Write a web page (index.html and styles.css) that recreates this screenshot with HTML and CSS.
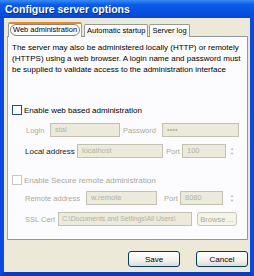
FILE: index.html
```html
<!DOCTYPE html>
<html lang="en">
<head>
    <meta charset="UTF-8">
    <title>Configure server options</title>
    <link rel="stylesheet" href="styles.css">
</head>
<body>
    <div class="window">
        <div class="titlebar">Configure server options</div>

        <div class="client">
            <div class="tabs">
                <div class="tab active"><span class="focus">Web administration</span></div>
                <div class="tab">Automatic startup</div>
                <div class="tab">Server log</div>
            </div>

            <div class="panel">
                <p class="intro">
                    The server may also be administered locally (HTTP) or remotely
                    (HTTPS) using a web browser. A login name and password must be
                    supplied to validate access to the administration interface
                </p>

                <label class="check check-web">
                    <span class="box"></span>Enable web based administration
                </label>

                <div class="row row-login">
                    <span class="lbl w-login">Login</span>
                    <span class="field w-70">stal</span>
                    <span class="lbl w-pass">Password</span>
                    <span class="field w-77">&bull;&bull;&bull;&bull;</span>
                </div>

                <div class="row row-local">
                    <span class="lbl lbl-dark w-local">Local address</span>
                    <span class="field w-86">localhost</span>
                    <span class="lbl w-port1">Port</span>
                    <span class="field w-44">100</span>
                    <span class="spin"><i>&#9650;</i><i>&#9660;</i></span>
                </div>

                <label class="check check-secure disabled">
                    <span class="box"></span>Enable Secure remote administration
                </label>

                <div class="row row-remote">
                    <span class="lbl w-remote">Remote address</span>
                    <span class="field w-71">w.remote</span>
                    <span class="lbl w-port2">Port</span>
                    <span class="field w-43">8080</span>
                    <span class="spin spin-far"><i>&#9650;</i><i>&#9660;</i></span>
                </div>

                <div class="row row-ssl">
                    <span class="lbl w-ssl">SSL Cert</span>
                    <span class="field field-path w-134">C:\Documents and Settings\All Users\</span>
                    <span class="btn btn-browse">Browse ...</span>
                </div>
            </div>

            <div class="actions">
                <span class="btn btn-main">Save</span>
                <span class="btn btn-main">Cancel</span>
            </div>
        </div>
    </div>
</body>
</html>
```

FILE: styles.css
```css
* {
    margin: 0;
    padding: 0;
    box-sizing: border-box;
}

body {
    width: 254px;
    height: 276px;
    overflow: hidden;
    font-family: 'Liberation Sans', Arial, sans-serif;
    font-size: 8px;
    color: #000;
    background: #0a3fc8;
}

.window {
    height: 276px;
    background: #ece9d8;
    border-left: 4px solid #0b4ae0;
    border-right: 4px solid #0b4ae0;
    border-bottom: 4px solid #0a3cc0;
    display: flex;
    flex-direction: column;
}

.titlebar {
    height: 18px;
    margin: 0 -4px;
    padding: 3px 0 0 5px;
    background: linear-gradient(180deg, #3a8cf7 0%, #0a5de8 25%, #0650e0 70%, #0a46d0 100%);
    color: #fff;
    font-weight: bold;
    font-size: 10.5px;
    text-shadow: 1px 1px 0 #0a2a8c;
}

.client {
    flex: 1;
    padding: 4px 2px 0 3px;
    display: flex;
    flex-direction: column;
}

/* tabs */
.tabs {
    display: flex;
    align-items: flex-end;
    height: 15px;
    padding-left: 1px;
    position: relative;
    z-index: 1;
}

.tab {
    height: 13px;
    line-height: 12px;
    padding: 0 2px;
    margin-right: 1px;
    background: linear-gradient(180deg, #fff 0%, #f4f3ee 100%);
    border: 1px solid #919b9c;
    border-bottom: none;
    border-radius: 2px 2px 0 0;
    font-size: 7.5px;
    white-space: nowrap;
}

.tab.active {
    height: 15px;
    background: #fcfcfe;
    border-top: 2px solid #e68b2c;
    padding: 0 1px;
    margin-right: 2px;
}

.tab .focus {
    display: inline-block;
    line-height: 10px;
    padding: 0 2px;
    border: 1px solid #9a7e66;
    border-radius: 7px;
}

.panel {
    height: 204px;
    margin-top: -1px;
    background: #fcfcfe;
    border: 1px solid #919b9c;
    border-left-color: #a0a8a8;
}

.intro {
    padding: 5px 5px 0 4px;
    line-height: 11px;
    font-size: 8px;
}

/* check boxes */
.check {
    display: flex;
    align-items: center;
    margin-left: 4px;
    font-size: 8px;
    white-space: nowrap;
}

.check .box {
    width: 10px;
    height: 10px;
    border: 1px solid #1c5180;
    background: #fff;
    margin-right: 2px;
}

.check-web {
    margin-top: 30px;
}

.check-secure {
    margin-top: 17px;
}

.disabled {
    color: #aca899;
}

.disabled .box {
    border-color: #cac8bb;
}

/* rows */
.row {
    display: flex;
    align-items: center;
    padding-left: 17px;
    height: 14px;
    color: #aca899;
    font-size: 7.5px;
    white-space: nowrap;
}

.row-login { margin-top: 8px; }
.row-local { margin-top: 7px; }
.row-remote { margin-top: 6px; }
.row-ssl { margin-top: 7px; }

.lbl {
    flex-shrink: 0;
}

.lbl-dark {
    color: #1a1a1a;
    font-size: 8px;
}

.field {
    flex-shrink: 0;
    height: 14px;
    line-height: 12px;
    padding-left: 4px;
    background: #ebeadb;
    border: 1px solid #c3c1b2;
    color: #b5b3a4;
    overflow: hidden;
}

.field-path {
    padding-left: 3px;
    font-size: 7px;
    letter-spacing: -0.1px;
}

.spin {
    display: flex;
    flex-direction: column;
    margin-left: 4px;
    font-size: 4px;
    line-height: 5px;
    color: #b9b7aa;
}

.spin-far { margin-left: 7px; }
.spin i { font-style: normal; }

.w-login { width: 25px; padding-left: 1px; }
.w-pass { width: 42px; padding-left: 3px; }
.w-local { width: 52px; }
.w-port1 { width: 19px; padding-left: 3px; }
.w-remote { width: 61px; }
.w-port2 { width: 23px; padding-left: 7px; }
.w-ssl { width: 33px; }

.w-70 { width: 70px; }
.w-77 { width: 77px; }
.w-86 { width: 86px; }
.w-44 { width: 44px; }
.w-71 { width: 71px; }
.w-43 { width: 43px; }
.w-134 { width: 134px; }

/* buttons */
.btn {
    display: flex;
    align-items: center;
    justify-content: center;
    background: linear-gradient(180deg, #fff 0%, #f3f2ec 60%, #dedbd0 100%);
    border: 1px solid #003c74;
    border-radius: 3px;
    font-size: 8px;
    color: #000;
    white-space: nowrap;
}

.btn-browse {
    flex-shrink: 0;
    width: 40px;
    height: 14px;
    margin-left: 5px;
    border-color: #c9c7ba;
    color: #aca899;
    background: #f5f4ea;
    font-size: 7.5px;
}

.actions {
    display: flex;
    justify-content: flex-end;
    gap: 16px;
    margin-top: 11px;
}

.btn-main {
    width: 52px;
    height: 16px;
}
```
